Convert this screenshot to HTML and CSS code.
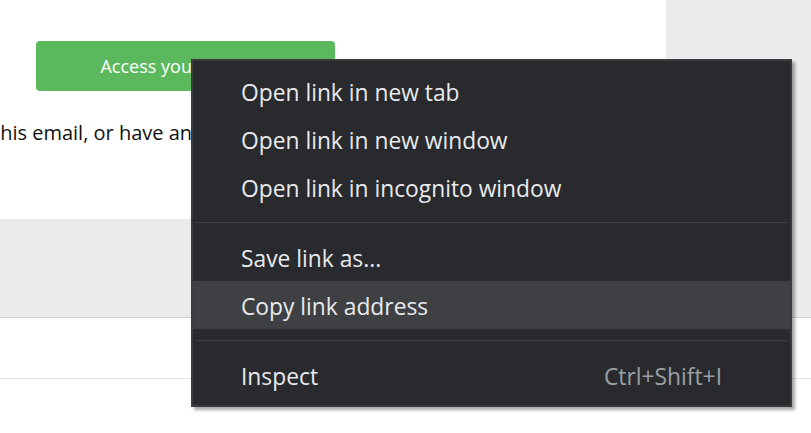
FILE: index.html
```html
<!DOCTYPE html>
<html lang="en">
<head>
<meta charset="utf-8">
<title>Context menu</title>
<link rel="stylesheet" href="styles.css">
</head>
<body>
<div class="top">
  <div class="card">
    <a class="btn" href="#">Access your account</a>
    <p class="note">this email, or have any questions, please contact us.</p>
  </div>
</div>
<div class="footer"></div>

<div class="menu">
  <div class="item">Open link in new tab</div>
  <div class="item">Open link in new window</div>
  <div class="item">Open link in incognito window</div>
  <div class="sep"></div>
  <div class="item">Save link as...</div>
  <div class="item active">Copy link address</div>
  <div class="sep"></div>
  <div class="item"><span>Inspect</span><span class="key">Ctrl+Shift+I</span></div>
</div>
</body>
</html>
```

FILE: styles.css
```css
html, body {
  margin: 0;
  padding: 0;
  background: #ffffff;
  overflow: hidden;
  width: 811px;
  height: 433px;
  font-family: "Open Sans", "Liberation Sans", sans-serif;
}

.top {
  height: 317px;
  background: #ebebeb;
  border-bottom: 1px solid #cfcfcf;
}

.card {
  width: 666px;
  height: 219px;
  background: #ffffff;
  padding-top: 41px;
  box-sizing: border-box;
  overflow: hidden;
}

.btn {
  display: flex;
  align-items: center;
  justify-content: center;
  margin-left: 36px;
  width: 299px;
  height: 50px;
  border-radius: 4px;
  background: #5cb85c;
  color: #ffffff;
  font-size: 18px;
  text-decoration: none;
}

.note {
  margin: 28px 0 0 -7px;
  font-size: 20px;
  color: #111111;
  white-space: nowrap;
}

.footer {
  height: 60px;
  border-bottom: 1px solid #e2e2e2;
}

.menu {
  position: absolute;
  left: 191px;
  top: 59px;
  width: 597px;
  padding: 6px 0;
  background: #292a2d;
  border: 2px solid #3a3b3f;
  box-shadow: 3px 3px 3px rgba(0, 0, 0, 0.35);
  color: #e8eaed;
  font-size: 22.8px;
}

.item {
  box-sizing: border-box;
  height: 48px;
  display: flex;
  align-items: center;
  justify-content: space-between;
  padding: 3px 68px 0 48px;
  white-space: nowrap;
}

.item.active {
  background: #3f4043;
}

.key {
  color: #9aa0a6;
}

.sep {
  height: 1px;
  margin: 11px 2px 10px;
  background: #404145;
}
```
